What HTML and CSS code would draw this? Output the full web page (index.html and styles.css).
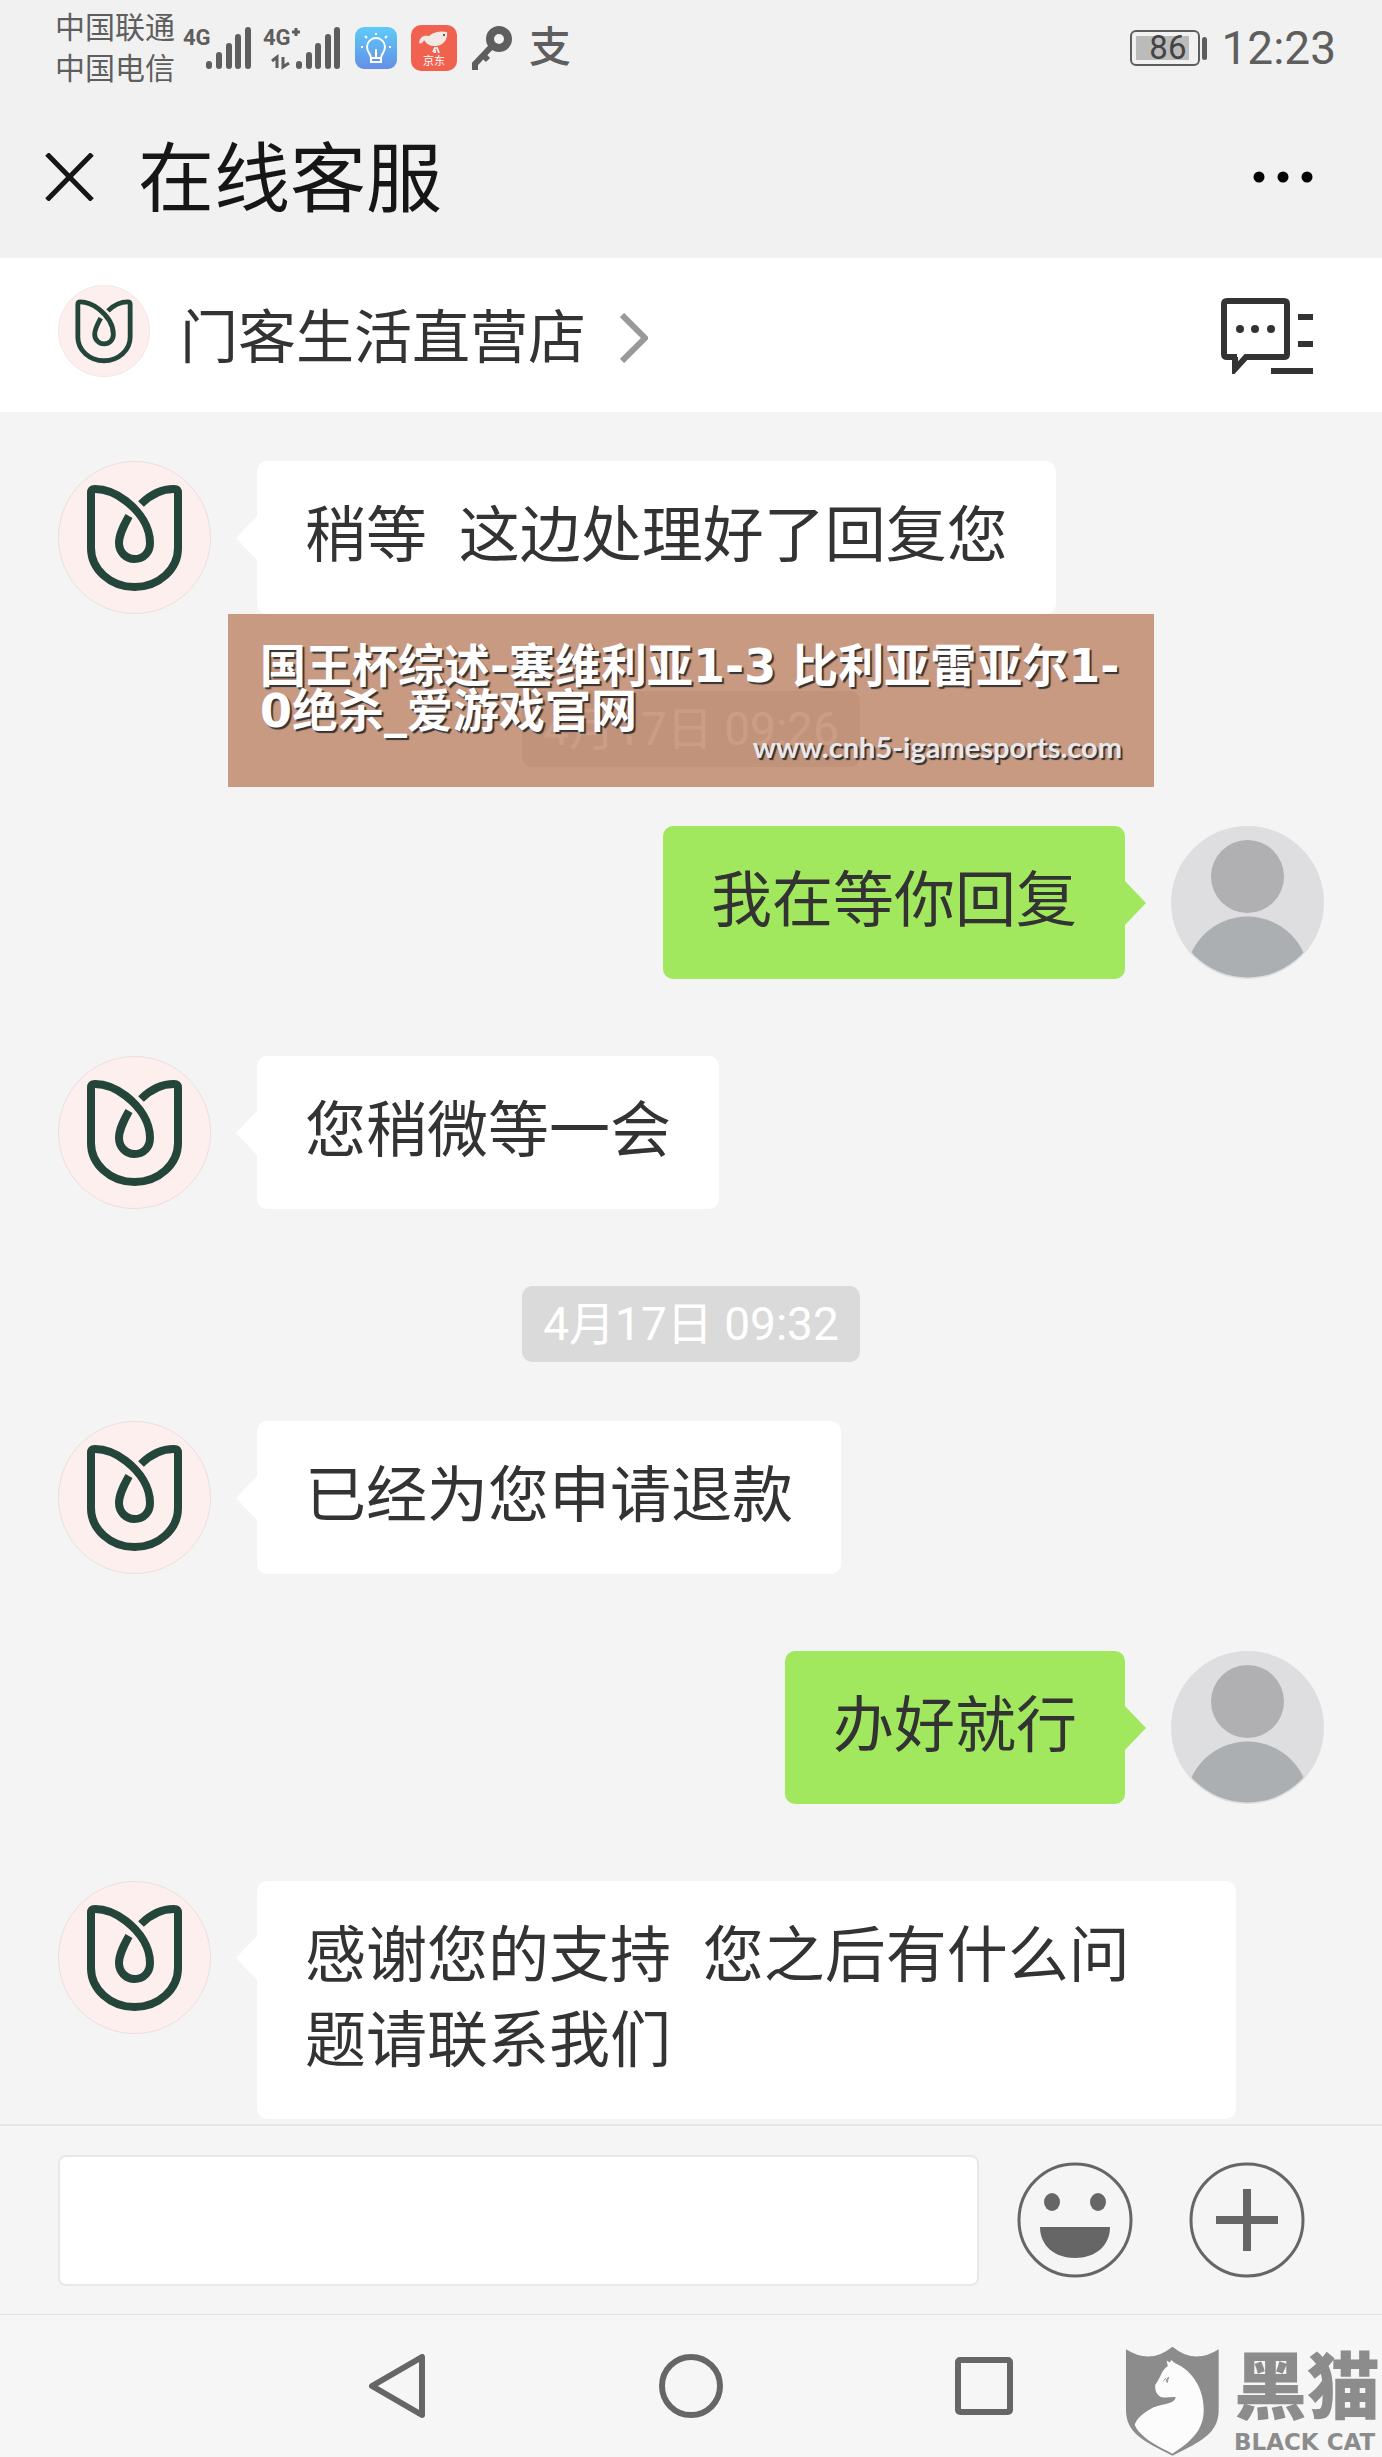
FILE: index.html
```html
<!DOCTYPE html>
<html lang="zh-CN">
<head>
    <meta charset="UTF-8">
    <meta name="viewport" content="width=device-width, initial-scale=1.0">
    <title>在线客服</title>
    <link rel="stylesheet" href="styles.css">
</head>
<body>

    <!-- 公用图标 -->
    <svg class="defs" width="0" height="0" aria-hidden="true">
        <symbol id="shop" viewBox="0 0 153 153">
            <circle cx="76.5" cy="76.5" r="76" fill="#fdefed" stroke="#e9dfde"/>
            <path d="M71 55C66 64 61 73 61 82C61 91 68 98 76.500 98C86 98 92 91 92 82C92 66 82 51 68 40C59 33 47 28 37 28Q33 28 33 32V87C33 108 52 126 76.500 126C101 126 120 108 120 87V32Q120 28 116 28C104 28 92 34 83 43" fill="none" stroke="#23453a" stroke-width="8"/>
        </symbol>
        <symbol id="user" viewBox="0 0 153 153">
            <clipPath id="round"><circle cx="76.5" cy="76.5" r="75"/></clipPath>
            <circle cx="76.5" cy="76.5" r="76.5" fill="#dedee1"/>
            <circle cx="76.5" cy="50.5" r="36.5" fill="#b0b0b3"/>
            <circle cx="76.5" cy="152" r="61.5" fill="#abafb2" clip-path="url(#round)"/>
        </symbol>
    </svg>

    <div class="page">
        <!-- 状态栏 -->
        <div class="status">
            <div class="carrier">
                <span>中国联通</span>
                <span>中国电信</span>
            </div>
            <svg class="signal" width="70" height="44" viewBox="0 0 70 44">
                <text x="0" y="19">4G</text>
                <path d="M26 40V38M36 40V29M46 40V20M55 40V11M65 40V4"/>
            </svg>
            <svg class="signal signal-2" width="78" height="44" viewBox="0 0 78 44">
                <text x="0" y="19">4G</text>
                <path d="M36 40V38M46 40V29M55 40V20M65 40V11M74 40V4"/>
                <path class="thin" d="M29 6H37M33 2V10M9 35L14 31V42M20 31V41L26 37"/>
            </svg>
            <svg class="app-bulb" width="42" height="42" viewBox="0 0 42 42">
                <defs><linearGradient id="blue" x1="0" y1="0" x2="0" y2="1"><stop offset="0" stop-color="#5ecbf9"/><stop offset="1" stop-color="#648fe6"/></linearGradient></defs>
                <rect width="42" height="42" rx="9" fill="url(#blue)"/>
                <path d="M16 31C16 27 12 25 12 20A9 9 0 0 1 30 20C30 25 26 27 26 31V35H16ZM16 31H26M21 30V22" fill="none" stroke="#fff" stroke-width="2"/>
                <path d="M21 6V8M10 9L12 11M32 9L30 11M6 20H8M34 20H36" stroke="#fff" stroke-width="2"/>
            </svg>
            <svg class="app-jd" width="46" height="46" viewBox="0 0 46 46">
                <rect width="46" height="46" rx="10" fill="#f0624f"/>
                <path d="M8 18C9 12 12 10 18 11C24 6 31 6 36 7C37 14 33 20 25 21C18 21 16 19 13 15C12 18 10 19 8 18Z" fill="#f3e9e4"/>
                <path d="M22 27L24 23L26 23L28 28M24 25V28" stroke="#f3e9e4" stroke-width="2" fill="none"/>
                <circle cx="33" cy="10" r="1" fill="#333"/>
                <text x="23" y="40" text-anchor="middle">京东</text>
            </svg>
            <svg class="key" width="42" height="44" viewBox="0 0 42 44">
                <circle cx="28" cy="13" r="9" fill="none" stroke="#5e5e5e" stroke-width="8"/>
                <path d="M20 21L4 38V44M13 30L17 34" fill="none" stroke="#5e5e5e" stroke-width="6"/>
            </svg>
            <span class="pay">支</span>
            <div class="battery"><span>86</span></div>
            <span class="clock">12:23</span>
        </div>

        <!-- 标题栏 -->
        <div class="titlebar">
            <button class="icon-btn" aria-label="关闭">
                <svg width="49" height="48" viewBox="0 0 49 48"><path d="M2 1L47 47M47 1L2 47" stroke="#161616" stroke-width="5"/></svg>
            </button>
            <h1>在线客服</h1>
            <button class="icon-btn" aria-label="更多">
                <svg width="60" height="12" viewBox="0 0 60 12"><circle cx="6" cy="6" r="5.5"/><circle cx="30" cy="6" r="5.5"/><circle cx="54" cy="6" r="5.5"/></svg>
            </button>
        </div>

        <!-- 店铺 -->
        <div class="shop">
            <svg class="shop-logo" width="92" height="92"><use href="#shop"/></svg>
            <a href="#" class="shop-name">门客生活直营店
                <svg width="28" height="50" viewBox="0 0 28 50"><path d="M2 2L25 25L2 48" fill="none" stroke="#999" stroke-width="6"/></svg>
            </a>
            <button class="icon-btn" aria-label="留言">
                <svg width="94" height="78" viewBox="0 0 94 78">
                    <path d="M18 61H8Q5 61 5 58V8Q5 5 8 5H65Q68 5 68 8V58Q68 61 65 61H27L16 73V61" fill="none" stroke="#333" stroke-width="6"/>
                    <path d="M79 21H94M79 48H94M52 75H94" stroke="#333" stroke-width="6"/>
                    <circle cx="21" cy="33" r="4" fill="#333"/><circle cx="36" cy="33" r="4" fill="#333"/><circle cx="52" cy="33" r="4" fill="#333"/>
                </svg>
            </button>
        </div>

        <!-- 聊天记录 -->
        <div class="chat">
            <div class="msg">
                <svg class="avatar"><use href="#shop"/></svg>
                <p class="bubble">稍等&nbsp;&nbsp;这边处理好了回复您</p>
            </div>
            <div class="time"><span>4月17日 09:26</span></div>
            <div class="msg mine">
                <p class="bubble">我在等你回复</p>
                <svg class="avatar"><use href="#user"/></svg>
            </div>
            <div class="msg">
                <svg class="avatar"><use href="#shop"/></svg>
                <p class="bubble">您稍微等一会</p>
            </div>
            <div class="time"><span>4月17日 09:32</span></div>
            <div class="msg">
                <svg class="avatar"><use href="#shop"/></svg>
                <p class="bubble">已经为您申请退款</p>
            </div>
            <div class="msg mine">
                <p class="bubble">办好就行</p>
                <svg class="avatar"><use href="#user"/></svg>
            </div>
            <div class="msg msg-last">
                <svg class="avatar"><use href="#shop"/></svg>
                <p class="bubble">感谢您的支持&nbsp;&nbsp;您之后有什么问题请联系我们</p>
            </div>

            <!-- 横幅 -->
            <div class="banner">
                <p class="banner-title">国王杯综述-塞维利亚1-3 比利亚雷亚尔1-<br>0绝杀_爱游戏官网</p>
                <p class="banner-url">www.cnh5-igamesports.com</p>
            </div>
        </div>

        <!-- 输入栏 -->
        <div class="inputbar">
            <input type="text" aria-label="输入消息">
            <button class="icon-btn face" aria-label="表情">
                <svg width="116" height="116" viewBox="0 0 116 116">
                    <circle cx="58" cy="58" r="56" fill="none" stroke="#666" stroke-width="3"/>
                    <ellipse cx="35" cy="40" rx="8" ry="9" fill="#666"/>
                    <ellipse cx="81" cy="40" rx="8" ry="9" fill="#666"/>
                    <path d="M23 65H93C93 84 78 96 58 96S23 84 23 65Z" fill="#666"/>
                </svg>
            </button>
            <button class="icon-btn plus" aria-label="更多功能">
                <svg width="116" height="116" viewBox="0 0 116 116">
                    <circle cx="58" cy="58" r="56" fill="none" stroke="#666" stroke-width="3"/>
                    <path d="M27 58H89M58 27V89" stroke="#666" stroke-width="8"/>
                </svg>
            </button>
        </div>

        <!-- 系统导航 -->
        <div class="nav">
            <button class="icon-btn" aria-label="返回">
                <svg width="64" height="64" viewBox="0 0 64 64"><path d="M56 3V61L6 32Z" fill="none" stroke="#666" stroke-width="6" stroke-linejoin="round"/></svg>
            </button>
            <button class="icon-btn" aria-label="主页">
                <svg width="64" height="64" viewBox="0 0 64 64"><circle cx="32" cy="32" r="29" fill="none" stroke="#666" stroke-width="6"/></svg>
            </button>
            <button class="icon-btn" aria-label="最近任务">
                <svg width="64" height="64" viewBox="0 0 64 64"><rect x="6" y="6" width="52" height="52" rx="2" fill="none" stroke="#666" stroke-width="6"/></svg>
            </button>
            <div class="blackcat">
                <svg width="95" height="111" viewBox="40 48 284 334">
                    <path d="M42 58Q115 105 182 50Q248 105 321 58V240C321 310 270 335 182 378C95 335 42 310 42 240Z" fill="#8c8c8c"/>
                    <path d="M164 92L168 108C150 118 148 140 130 165C128 185 138 198 150 202C165 205 180 200 192 202C186 225 150 220 120 235C95 248 75 265 68 285C85 325 140 350 182 372C240 335 276 300 276 240C276 175 240 120 190 100L178 90L174 98Z" fill="#fcfcfc"/>
                    <path d="M155 152L163 145M166 158L170 142L164 150Z" fill="none" stroke="#8c8c8c" stroke-width="3"/>
                </svg>
                <div class="blackcat-text">
                    <b>黑猫</b>
                    <span>BLACK CAT</span>
                </div>
            </div>
        </div>
    </div>

</body>
</html>
```
FILE: styles.css
```css
* {
    box-sizing: border-box;
}
body {
    margin: 0;
    font-family: Roboto, "Noto Sans CJK SC", sans-serif;
    background-color: #f4f4f4;
    color: #333;
}
h1, p {
    margin: 0;
    font-weight: normal;
}
svg {
    display: block;
    flex-shrink: 0;
}
.defs {
    position: absolute;
}
.page {
    display: flex;
    flex-direction: column;
    min-height: 100vh;
}
.icon-btn {
    padding: 0;
    border: none;
    background: none;
    cursor: pointer;
}

/* 状态栏 */
.status {
    display: flex;
    align-items: center;
    height: 95px;
    padding: 0 46px 0 55px;
    background-color: #f1f1f1;
    color: #5e5e5e;
}
.carrier {
    display: flex;
    flex-direction: column;
    font-size: 30px;
    line-height: 41px;
}
.signal {
    margin-left: 8px;
}
.signal text {
    font-size: 22px;
    font-weight: bold;
    fill: #5e5e5e;
}
.signal path {
    fill: none;
    stroke: #5e5e5e;
    stroke-width: 6;
    stroke-linecap: round;
}
.signal .thin {
    stroke-width: 3;
    stroke-linecap: butt;
}
.signal-2 {
    margin-left: 10px;
}
.app-bulb, .app-jd, .key {
    margin-left: 14px;
}
.app-jd text {
    font-size: 11px;
    fill: #fff;
}
.pay {
    margin-left: 16px;
    font-size: 42px;
    line-height: 44px;
    font-weight: 500;
}
.battery {
    position: relative;
    width: 70px;
    height: 36px;
    margin-left: auto;
    padding: 4px;
    border: 2px solid #5e5e5e;
    border-radius: 6px;
}
.battery span {
    display: block;
    width: 53px;
    padding-right: 3px;
    background-color: #bbb;
    color: #444;
    font-size: 33px;
    line-height: 28px;
    height: 24px;
    line-height: 24px;
    text-align: right;
}
.battery::after {
    content: "";
    position: absolute;
    top: 5px;
    right: -9px;
    width: 5px;
    height: 23px;
    border-radius: 3px;
    background-color: #5e5e5e;
}
.clock {
    margin-left: 21px;
    font-size: 46px;
}

/* 标题栏 */
.titlebar {
    display: flex;
    align-items: center;
    height: 163px;
    padding: 0 69px 0 45px;
    background-color: #f1f1f1;
}
.titlebar h1 {
    flex: 1;
    margin-left: 44px;
    padding-top: 6px;
    color: #161616;
    font-size: 76px;
    line-height: 100px;
}

/* 店铺 */
.shop {
    display: flex;
    align-items: center;
    justify-content: space-between;
    height: 154px;
    padding: 0 69px 0 58px;
    background-color: #fff;
}
.shop-logo {
    margin-bottom: 8px;
}
.shop-name {
    display: flex;
    align-items: center;
    flex: 1;
    gap: 34px;
    margin-left: 30px;
    padding-top: 5px;
    color: #333;
    font-size: 58px;
    line-height: 80px;
    text-decoration: none;
}

/* 聊天记录 */
.chat {
    position: relative;
    flex: 1;
    padding: 49px 58px 5px;
}
.msg {
    display: flex;
    align-items: flex-start;
    gap: 46px;
    margin-bottom: 77px;
}
.msg-last {
    margin-bottom: 0;
}
.mine {
    justify-content: flex-end;
}
.avatar {
    width: 153px;
    height: 153px;
}
.bubble {
    position: relative;
    margin-right: 88px;
    padding: 30px 48px 38px;
    border-radius: 10px;
    background-color: #fff;
    font-family: "Noto Sans", "Noto Sans CJK SC", sans-serif;
    font-size: 61px;
    line-height: 85px;
}
.bubble::before {
    content: "";
    position: absolute;
    top: 54px;
    left: -21px;
    border: 23px solid transparent;
    border-left-width: 0;
    border-right: 22px solid #fff;
}
.mine .bubble {
    margin-right: 0;
    background-color: #a1e85e;
}
.mine .bubble::before {
    left: auto;
    right: -21px;
    border-right-width: 0;
    border-left: 22px solid #a1e85e;
}
.time {
    display: flex;
    justify-content: center;
    margin-bottom: 59px;
}
.time span {
    padding: 0 21px;
    border-radius: 10px;
    background-color: #dadada;
    color: #fff;
    font-size: 46px;
    line-height: 76px;
}

/* 横幅 */
.banner {
    position: absolute;
    top: 202px;
    left: 228px;
    right: 228px;
    height: 173px;
    padding: 30px 32px;
    background-color: rgba(184, 119, 86, 0.72);
    color: #fff;
    text-shadow: 2px 2px 1px #333;
}
.banner-title {
    font-family: "DejaVu Sans", "Noto Sans CJK SC", sans-serif;
    font-size: 46px;
    font-weight: bold;
    line-height: 45px;
    white-space: nowrap;
}
.banner-url {
    color: #e8e8ea;
    font-family: Lato, sans-serif;
    font-size: 29px;
    font-weight: bold;
    line-height: 26px;
    text-align: right;
}

/* 输入栏 */
.inputbar {
    display: flex;
    align-items: center;
    height: 190px;
    padding: 0 77px 0 58px;
    border-top: 2px solid #e5e5e5;
    background-color: #f5f5f5;
}
.inputbar input {
    flex: 1;
    min-width: 0;
    height: 131px;
    padding: 0 30px;
    border: 2px solid #e8e8e8;
    border-radius: 8px;
    background-color: #fff;
    font-size: 61px;
}
.face {
    margin-left: 38px;
}
.plus {
    margin-left: 56px;
}

/* 系统导航 */
.nav {
    position: relative;
    display: flex;
    align-items: center;
    justify-content: center;
    gap: 229px;
    height: 143px;
    border-top: 1px solid #e3e3e3;
    background-color: #f6f6f6;
}
.blackcat {
    position: absolute;
    right: 2px;
    bottom: 0;
    display: flex;
    gap: 14px;
    color: #8c8c8c;
}
.blackcat-text {
    display: flex;
    flex-direction: column;
}
.blackcat-text b {
    font-size: 73px;
    font-weight: 900;
    line-height: 84px;
}
.blackcat-text span {
    font-family: "DejaVu Sans", sans-serif;
    font-size: 23px;
    font-weight: bold;
    line-height: 24px;
}
```
